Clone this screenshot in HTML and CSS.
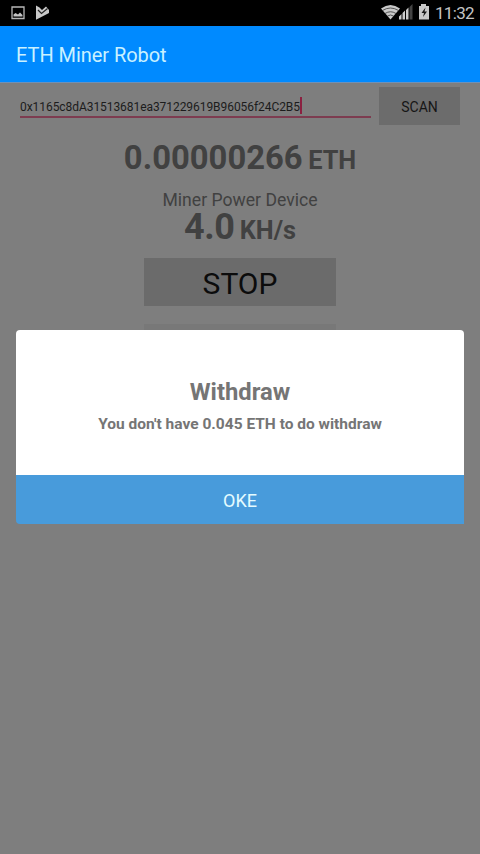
FILE: index.html
```
<!DOCTYPE html>
<html lang="en">
<head>
<meta charset="utf-8">
<title>ETH Miner Robot</title>
<link rel="stylesheet" href="styles.css">
</head>
<body>
<div class="status">
  <svg class="notifications" width="60" height="26" viewBox="0 0 60 26">
    <path d="M12 7h12v11.500h-12z" fill="none" stroke="#b8b8b8" stroke-width="1.300"/>
    <path d="M13.500 16.500v-2l2-1.500 2.500 1.500 2-2 2.500 2.500v1.500z" fill="#c4c4c4"/>
    <path d="M36 5.500l3.500 2 2.500 2.500 4-3.500 3 3.500v3L36 19.800z" fill="#c8c8c8"/>
    <path d="M38 10l3.500 3.500 6-5" fill="none" stroke="#222" stroke-width="1.200"/>
  </svg>
  <svg class="indicators" width="52" height="26" viewBox="380 0 52 26">
    <path d="M381 8.500Q390.500 1.500 400 8.500L390.500 19.500z" fill="#c9c9c9"/>
    <path d="M382.500 10.500q8-5 16 0M385 13.500q5.500-3.500 11 0M387.500 16q3-2 6 0" fill="none" stroke="#333" stroke-width=".8"/>
    <path d="M399 19.500v-3l2.500-2.500v5.500zM402.500 19.500v-6.500l2.500-2.500v9zM406 19.500V10l2.500-2.500v12z" fill="#ccc"/>
    <path d="M409.500 19.500V7l3-3v15.500z" fill="#444"/>
    <path d="M419 6h2V4h5v2h3v13.500h-10z" fill="#c8c8c8"/>
    <path d="M425.500 7.500l-4 5.500h2.500l-1 4 4-5.500h-2.500z" fill="#161616"/>
  </svg>
  <time class="clock">11:32</time>
</div>
<header class="appbar"><h1>ETH Miner Robot</h1></header>
<main class="miner">
  <div class="wallet">
    <div class="field"><span class="address">0x1165c8dA31513681ea371229619B96056f24C2B5</span><span class="caret"></span></div>
    <button class="scan">SCAN</button>
  </div>
  <p class="balance"><span class="amount">0.00000266</span> <span class="unit">ETH</span></p>
  <p class="label"><span>Miner Power Device</span></p>
  <p class="power"><span class="rate">4.0</span> <span class="unit">KH/s</span></p>
  <button class="stop">STOP</button>
  <div class="next"></div>
</main>
<section class="dialog" role="dialog">
  <div class="message">
    <h2><span>Withdraw</span></h2>
    <p><span>You don't have 0.045 ETH to do withdraw</span></p>
  </div>
  <button class="ok">OKE</button>
</section>
</body>
</html>
```
FILE: styles.css
```
* { box-sizing: border-box; }
body {
  margin: 0;
  height: 854px;
  overflow: hidden;
  background: #7e7e7e;
  font-family: Roboto, "Liberation Sans", sans-serif;
}
h1, h2, p { margin: 0; }
button { border: 0; padding: 0; font-family: inherit; font-weight: 400; }
.status {
  height: 26px;
  background: #000;
  display: flex;
  align-items: center;
}
.notifications { margin-right: 320px; flex: none; }
.indicators { flex: none; }
.clock { margin-left: 3px; color: #c4c4c4; font-size: 17px; line-height: 26px; letter-spacing: -.7px; }
.appbar {
  height: 57px;
  padding-left: 16px;
  background: #008aff;
  border-bottom: 1px solid #6f91b8;
}
.appbar h1 { color: #c9f1ff; font-size: 20px; font-weight: 400; line-height: 58px; letter-spacing: -.05px; }
.miner { display: flex; flex-direction: column; align-items: center; padding-top: 4px; color: #414141; }
.wallet { display: flex; justify-content: space-between; width: 440px; height: 38px; }
.field {
  width: 351px;
  height: 31px;
  display: flex;
  align-items: center;
  border-bottom: 2px solid #7d3c50;
  padding-top: 10px;
}
.address { color: #1c1c1c; font-size: 12px; line-height: 18px; letter-spacing: -.06px; white-space: nowrap; }
.caret { width: 2px; height: 17px; margin-top: -2px; background: #8b2040; }
.scan { width: 81px; height: 38px; background: #6c6c6c; color: #161616; font-size: 14px; line-height: 41px; }
.balance { height: 40px; margin-top: 13px; font-size: 22px; font-weight: 700; line-height: 40px; white-space: nowrap; }
.amount { font-size: 32.8px; }
.unit { font-size: 25.3px; }
.label { height: 24px; margin-top: 10px; font-size: 17.6px; line-height: 24px; }
.power { height: 38px; margin-top: -4px; font-size: 21px; font-weight: 700; line-height: 38px; }
.rate { font-size: 36px; letter-spacing: -.4px; }
.stop { width: 192px; height: 48px; margin-top: 12px; background: #6b6b6b; color: #0c0c0c; font-size: 30px; line-height: 52px; }
.next { width: 192px; height: 48px; margin-top: 18px; background: #787878; }
.dialog {
  position: absolute;
  top: 330px;
  left: 16px;
  width: 448px;
  height: 194px;
  border-radius: 4px 4px 0 4px;
  overflow: hidden;
  text-align: center;
  color: #757575;
}
.message { height: 145px; padding-top: 46px; background: #fff; }
.message h2 { font-size: 23.8px; line-height: 32px; font-weight: 700; }
.message p { margin-top: 4px; font-size: 15.5px; line-height: 24px; font-weight: 700; }
.ok { display: block; width: 448px; height: 49px; background: #489bdb; color: #e4fbff; font-size: 18px; line-height: 51px; }
```
